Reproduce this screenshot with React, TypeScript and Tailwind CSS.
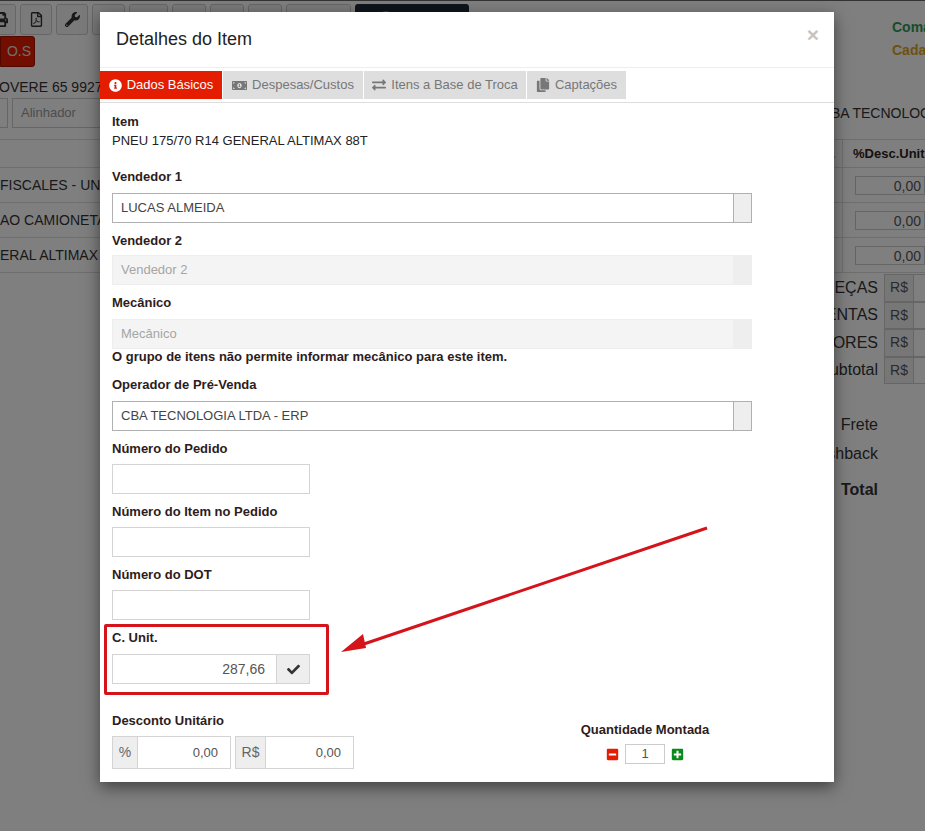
import React from "react";
import {
  FaCheck,
  FaCopy,
  FaExchangeAlt,
  FaInfoCircle,
  FaMinusSquare,
  FaMoneyBillAlt,
  FaPlusSquare,
  FaPrint,
  FaRegFilePdf,
  FaWhatsapp,
  FaWrench,
} from "react-icons/fa";

function ToolButton({ w, children }: { w: string; children?: React.ReactNode }) {
  return (
    <div className={`${w} h-[31px] shrink-0 flex items-center justify-center border border-[#ccc] rounded-[3px] bg-[#f5f5f5] text-[#333] text-[15px]`}>
      {children}
    </div>
  );
}

function BackgroundRow({ text, offset }: { text: string; offset: string }) {
  return (
    <div className="h-[35px] border-b border-[#ddd] flex items-center justify-between">
      <span className={`${offset} text-[14px] text-[#333] whitespace-nowrap`}>{text}</span>
      <div className="flex h-full">
        <div className="w-[13px] border-l border-[#ddd]" />
        <div className="w-[70px] flex items-center">
          <div className="w-[70px] h-[19px] border border-[#ccc] bg-white text-right text-[14px] leading-[18px] text-[#555] pr-[3px]">0,00</div>
        </div>
      </div>
    </div>
  );
}

function SummaryRow({ label }: { label: string }) {
  return (
    <div className="h-[27.5px] flex items-center justify-end">
      <span className="text-[16px] text-[#333] mr-[6px]">{label}</span>
      <div className="w-[30px] h-full border border-[#ccc] bg-[#eee] text-[14px] text-[#555] flex items-center justify-center">R$</div>
      <div className="w-[11px] h-full border-y border-[#ccc] bg-white" />
    </div>
  );
}

function Label({ children, className = "" }: { children: React.ReactNode; className?: string }) {
  return <p className={`text-[13px] leading-[16px] font-bold text-[#2d1c20] ${className}`}>{children}</p>;
}

function SelectField({ value, disabled }: { value: string; disabled?: boolean }) {
  return (
    <div className={`w-[640px] h-[30px] flex border ${disabled ? "border-[#eee] bg-[#f4f4f4]" : "border-[#b0b0b0] bg-white"}`}>
      <div className={`flex-1 pl-[8px] text-[13px] leading-[28px] ${disabled ? "text-[#a5a5a5]" : "text-[#444]"}`}>{value}</div>
      <div className={`w-[18px] ${disabled ? "bg-[#eeeeee]" : "bg-[#eeeeee] border-l border-[#b0b0b0]"}`} />
    </div>
  );
}

function TextBox({ className = "" }: { className?: string }) {
  return <div className={`w-[198px] h-[30px] border border-[#d4d4d4] bg-white ${className}`} />;
}

function Tab({ active, icon, label, w }: { active?: boolean; icon: React.ReactNode; label: string; w: string }) {
  return (
    <div
      className={`${w} h-[28px] flex items-center justify-center gap-[5px] text-[13px] ${
        active ? "bg-[#e41c00] text-white" : "bg-[#dedede] text-[#777]"
      }`}
    >
      {icon}
      <span>{label}</span>
    </div>
  );
}

function Addon({ label, w, inputW }: { label: string; w: string; inputW: string }) {
  return (
    <div className="flex h-[33px] border border-[#d4d4d4]">
      <div className={`${w} bg-[#eeeeee] border-r border-[#d4d4d4] flex items-center justify-center text-[14px] text-[#666]`}>{label}</div>
      <div className={`${inputW} bg-white text-right pr-[12px] text-[13px] leading-[31px] text-[#555]`}>0,00</div>
    </div>
  );
}

export default function App() {
  return (
    <div className="relative w-[925px] h-[831px] overflow-hidden bg-white font-['Liberation_Sans',Arial,sans-serif]">
      {/* page behind the dialog */}
      <div className="pt-[4px]">
        <div className="flex gap-[4px] -ml-[16px]">
          <ToolButton w="w-[32px]"><FaPrint /></ToolButton>
          <ToolButton w="w-[32px]"><FaRegFilePdf /></ToolButton>
          <ToolButton w="w-[32px]"><FaWrench /></ToolButton>
          <ToolButton w="w-[33px]" />
          <ToolButton w="w-[39px]" />
          <ToolButton w="w-[34px]" />
          <ToolButton w="w-[34px]" />
          <ToolButton w="w-[34px]" />
          <ToolButton w="w-[65px]" />
          <div className="w-[114px] h-[31px] rounded-[3px] bg-[#1d2b36] pl-[22px] pt-[6px] text-[#7ecb20] text-[18px]">
            <FaWhatsapp />
          </div>
          <div className="ml-[420px]" />
        </div>
        <div className="flex justify-between h-[31px]">
          <div className="w-[35px] h-[31px] mt-[1px] bg-[#e41c00] border border-[#a01000] rounded-r-[3px] text-[14px] text-[#ddd] leading-[29px] text-right pr-[3px]">O.S</div>
        </div>
        <p className="mt-[13px] -ml-[1px] text-[14px] leading-[16px] text-[#333]">OVERE 65 99270</p>
        <div className="mt-[3px] flex justify-between items-center h-[30px]">
          <div className="flex gap-[4px] -ml-[4px]">
            <div className="w-[12px] h-[30px] border border-[#ccc]" />
            <div className="w-[120px] h-[30px] border border-[#ccc] pl-[8px] text-[13px] leading-[28px] text-[#999]">Alinhador</div>
          </div>
          <span className="text-[14px] text-[#333] whitespace-nowrap -mr-[6px]">CBA TECNOLOG</span>
        </div>
        <div className="mt-[11px] h-[29px] border-y border-[#ddd] flex justify-end items-center">
          <span className="text-[13px] font-bold text-[#333] mr-[7px]">.</span>
          <span className="w-[83px] border-l border-[#ddd] pl-[10px] text-[13px] leading-[27px] font-bold text-[#2d1c20] whitespace-nowrap">%Desc.Unit</span>
        </div>
        <BackgroundRow text="FISCALES - UNIDADE" offset="ml-0" />
        <BackgroundRow text="AO CAMIONETA/UTILITARIO" offset="ml-0" />
        <BackgroundRow text="ERAL ALTIMAX 88T" offset="ml-0" />
        <div className="mt-[1px]">
          <SummaryRow label="PEÇAS" />
          <SummaryRow label="FERRAMENTAS" />
          <SummaryRow label="VALORES" />
          <SummaryRow label="Subtotal" />
        </div>
        <div className="mr-[47px] text-right text-[16px] text-[#333]">
          <p className="mt-[32px] leading-[18px]">Frete</p>
          <p className="mt-[11px] leading-[18px]">Cashback</p>
          <p className="mt-[18px] leading-[18px] font-bold">Total</p>
        </div>
      </div>

      <div className="absolute top-[16px] left-[892px] text-[14px] leading-[23px] font-bold whitespace-nowrap">
        <p className="text-[#2f9a55]">Comandos</p>
        <p className="text-[#d9a520]">Cadastro</p>
      </div>

      {/* backdrop */}
      <div className="absolute inset-0 bg-black/50 border-t border-[#333]" />

      {/* dialog */}
      <div className="absolute left-[100px] top-[12px] w-[734px] h-[770px] bg-white shadow-[0_5px_15px_rgba(0,0,0,0.5)]">
        <div className="h-[56px] border-b border-[#eee] relative pl-[16px] pt-[16px]">
          <h4 className="text-[18px] leading-[22px] text-[#222]">Detalhes do Item</h4>
          <span className="absolute right-[15px] top-[12px] text-[21px] leading-[22px] font-bold text-[#c4c4c4]">×</span>
        </div>
        <div className="mt-[3px] h-[32px] border-b border-[#ddd] flex gap-[1px]">
          <Tab active w="w-[122px]" icon={<FaInfoCircle className="text-[13px]" />} label="Dados Básicos" />
          <Tab w="w-[140px]" icon={<FaMoneyBillAlt className="text-[15px]" />} label="Despesas/Custos" />
          <Tab w="w-[162px]" icon={<FaExchangeAlt className="text-[14px]" />} label="Itens a Base de Troca" />
          <Tab w="w-[99px]" icon={<FaCopy className="text-[14px]" />} label="Captações" />
        </div>

        <div className="relative px-[12px] pt-[11px]">
          <Label>Item</Label>
          <p className="mt-[3px] text-[13px] leading-[16px] text-[#222]">PNEU 175/70 R14 GENERAL ALTIMAX 88T</p>

          <Label className="mt-[20px] mb-[8px]">Vendedor 1</Label>
          <SelectField value="LUCAS ALMEIDA" />
          <Label className="mt-[10px] mb-[6px]">Vendedor 2</Label>
          <SelectField value="Vendedor 2" disabled />
          <Label className="mt-[10px] mb-[8px]">Mecânico</Label>
          <SelectField value="Mecânico" disabled />
          <Label className="mt-[0px]">O grupo de itens não permite informar mecânico para este item.</Label>
          <Label className="mt-[12px] mb-[8px]">Operador de Pré-Venda</Label>
          <SelectField value="CBA TECNOLOGIA LTDA - ERP" />
          <Label className="mt-[10px] mb-[7px]">Número do Pedido</Label>
          <TextBox />
          <Label className="mt-[10px] mb-[7px]">Número do Item no Pedido</Label>
          <TextBox />
          <Label className="mt-[10px] mb-[7px]">Número do DOT</Label>
          <TextBox />
          <Label className="mt-[10px] mb-[8px]">C. Unit.</Label>
          <div className="w-[198px] h-[30px] border border-[#d4d4d4] flex">
            <div className="flex-1 text-right pr-[11px] text-[14px] leading-[28px] text-[#555]">287,66</div>
            <div className="w-[33px] bg-[#eeeeee] border-l border-[#d4d4d4] flex items-center justify-center text-[13px] text-[#333]">
              <FaCheck />
            </div>
          </div>

          <div className="flex justify-between mt-[29px]">
            <div>
              <Label className="mb-[7px]">Desconto Unitário</Label>
              <div className="flex gap-[4px]">
                <Addon label="%" w="w-[25px]" inputW="w-[92px]" />
                <Addon label="R$" w="w-[30px]" inputW="w-[87px]" />
              </div>
            </div>
            <div className="w-[130px] mr-[112px] mt-[9px] flex flex-col items-center">
              <Label>Quantidade Montada</Label>
              <div className="flex items-center gap-[6px] mt-[6px]">
                <FaMinusSquare className="text-[13px] text-[#e41c00]" />
                <div className="w-[40px] h-[20px] border border-[#ccc] text-center text-[13px] leading-[18px] text-[#555]">1</div>
                <FaPlusSquare className="text-[13px] text-[#0a8a1a]" />
              </div>
            </div>
          </div>
        </div>
      </div>

      {/* annotation */}
      <div className="absolute left-[104px] top-[624px] w-[225px] h-[71px] border-[3px] border-[#d4131b] rounded-[2px]" />
      <svg className="absolute left-[335px] top-[520px]" width="380" height="140" viewBox="0 0 380 140" fill="none">
        <path d="M372 8 L20 127" stroke="#d4131b" strokeWidth="3" />
        <path d="M6 132 L28 114 L31 128 Z" fill="#d4131b" />
      </svg>
    </div>
  );
}
